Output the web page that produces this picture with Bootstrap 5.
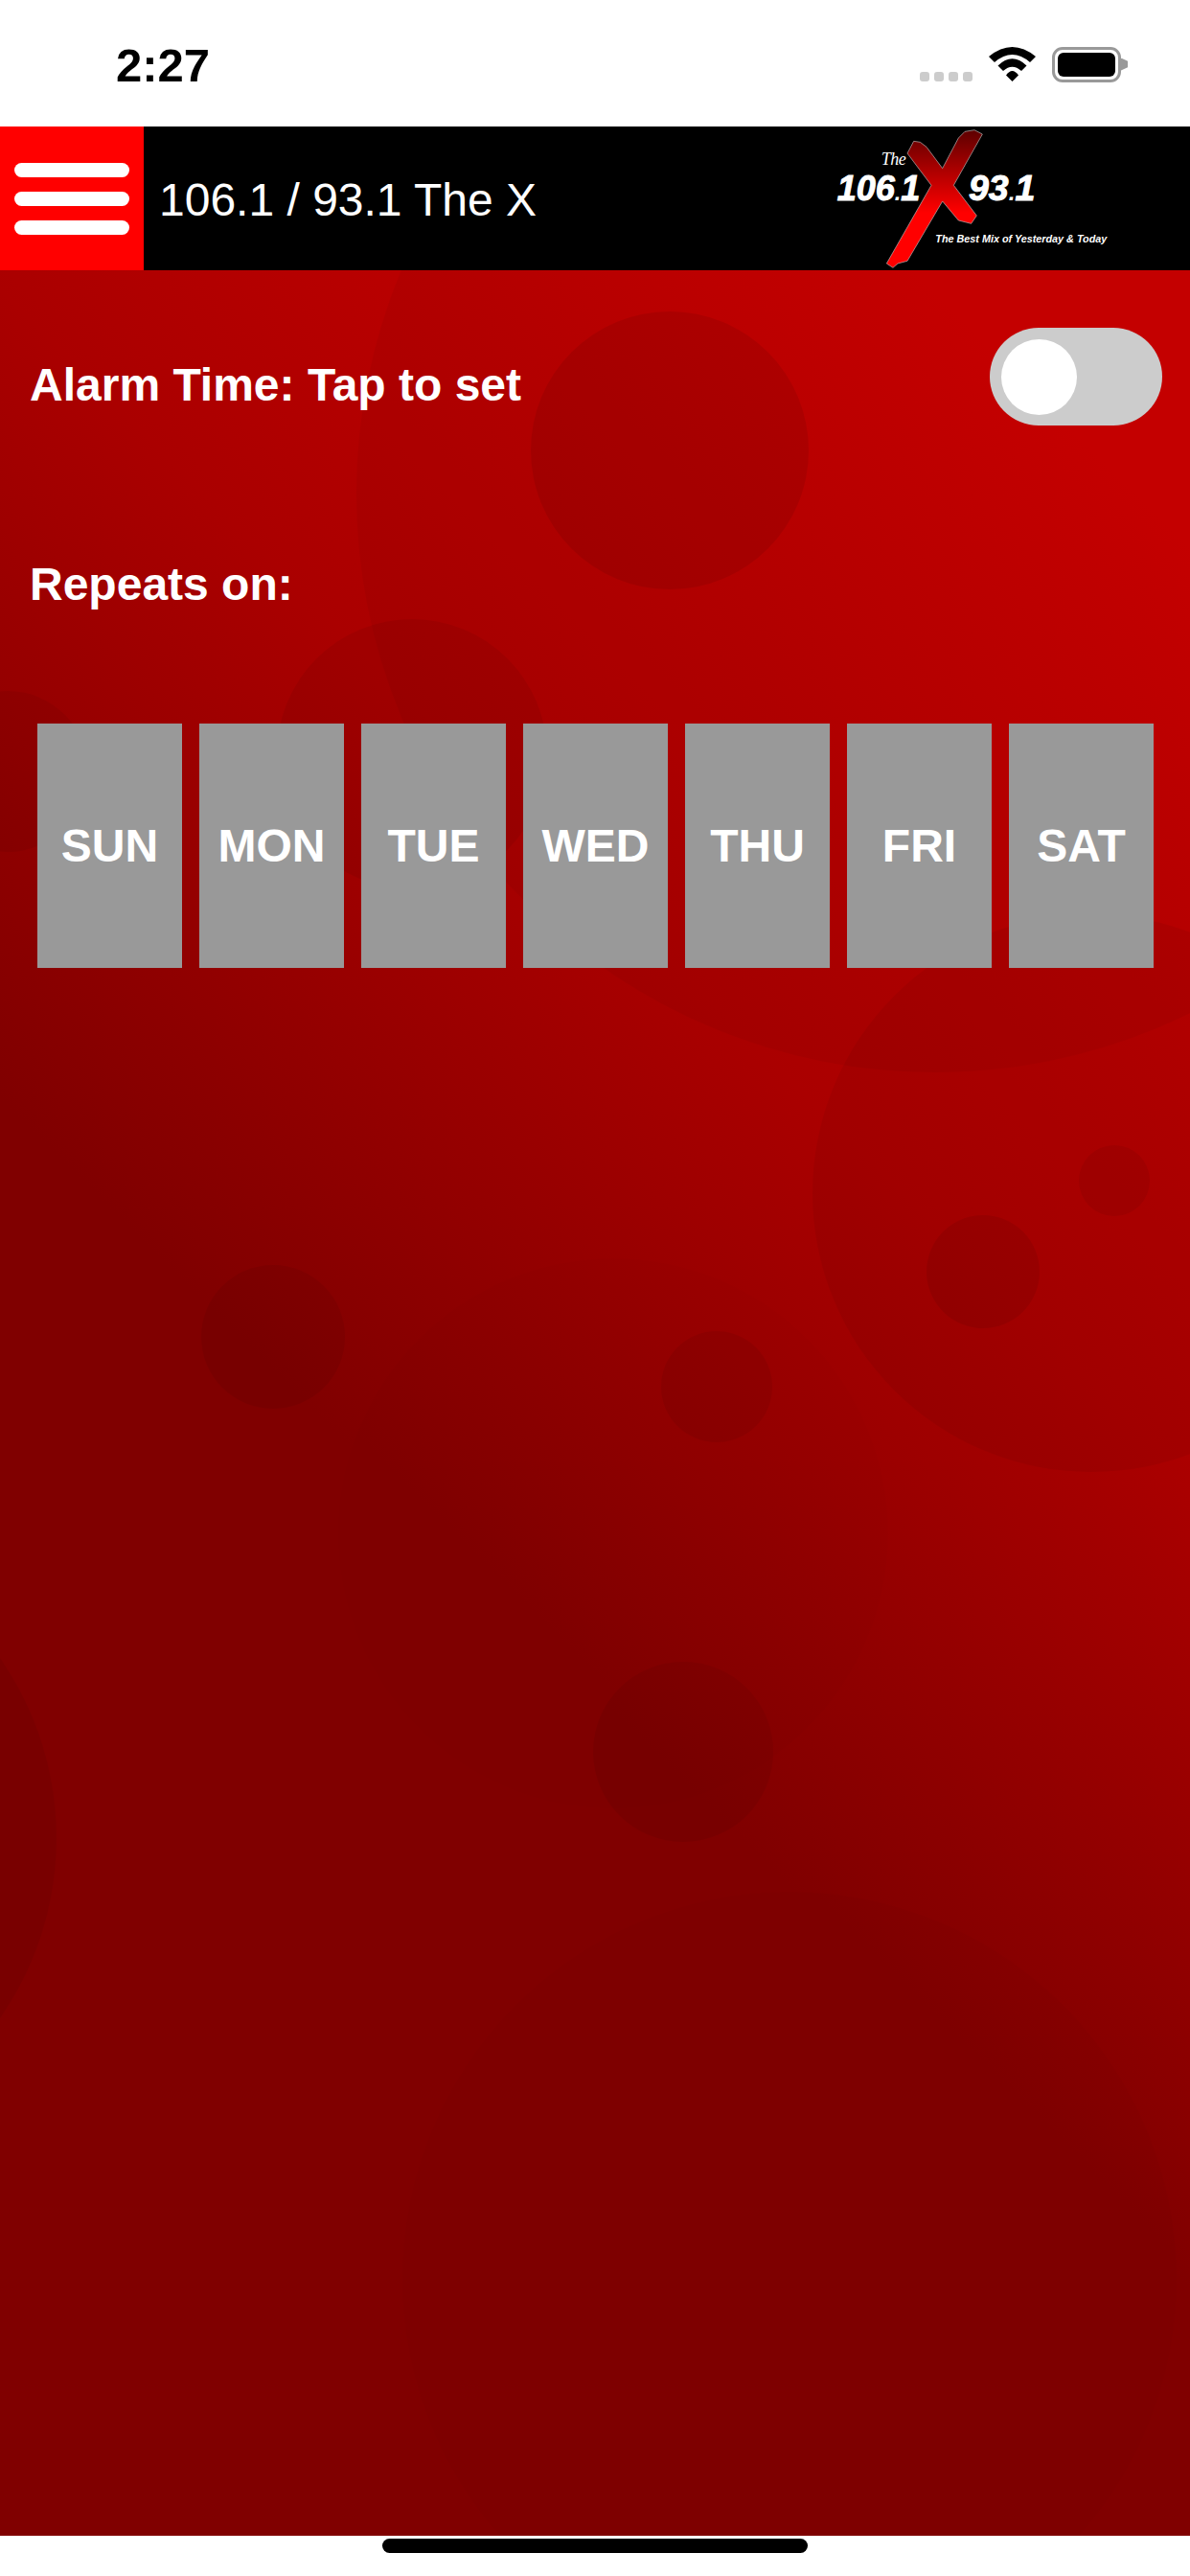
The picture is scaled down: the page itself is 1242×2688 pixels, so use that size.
<!DOCTYPE html>
<html lang="en">

<head>
    <meta charset="UTF-8">
    <meta name="viewport" content="width=device-width, initial-scale=1">
    <title>106.1 / 93.1 The X - Alarm</title>
    <link href="https://cdn.jsdelivr.net/npm/bootstrap@5.3.0/dist/css/bootstrap.min.css" rel="stylesheet">
    <style>
        body {
            width: 1242px;
            height: 2688px;
            background: #fff;
            font-family: "Liberation Sans", Arial, sans-serif;
        }

        .status-strip {
            height: 132px;
            padding-top: 2px;
            padding-left: 121px;
            padding-right: 65px;
        }

        .status-time {
            font-size: 49px;
            font-weight: 700;
            line-height: 1;
            margin-top: 2px;
            color: #000;
        }

        .signal-dot {
            width: 10px;
            height: 10px;
            border-radius: 3px;
            background: #ccc;
        }

        .signal-dots {
            gap: 5px;
            margin-top: 26px;
            margin-right: 17px;
        }

        .wifi-icon {
            margin-right: 17px;
        }

        .battery-shell {
            width: 72px;
            height: 37px;
            padding: 3px;
            border: 3px solid #999;
            border-radius: 11px;
        }

        .battery-fill {
            height: 100%;
            background: #000;
            border-radius: 6px;
        }

        .battery-nub {
            width: 7px;
            height: 13px;
            background: #999;
            clip-path: polygon(0 0, 100% 25%, 100% 75%, 0 100%);
        }

        .app-header {
            height: 150px;
            background: #000;
        }

        .menu-box {
            width: 150px;
            height: 150px;
            gap: 15px;
            background: #f00;
            border: 0;
            padding: 0;
        }

        .menu-line {
            width: 120px;
            height: 15px;
            background: #fff;
            border-radius: 8px;
        }

        .app-title {
            font-size: 48px;
            line-height: 1;
            color: #fff;
            margin-left: 16px;
            margin-top: 3px;
        }

        .logo-art {
            margin-right: 82px;
        }

        .alarm-page {
            height: 2364px;
            overflow: hidden;
            background: linear-gradient(45deg, #800000 0%, #800000 41.6%, #aa0000 65%, #cc0000 92%, #cc0000 100%);
        }

        .bubble-layer {
            top: 0;
            left: 0;
        }

        .page-body {
            z-index: 1;
        }

        .alarm-row {
            height: 102px;
            margin-top: 60px;
            padding-left: 31px;
            padding-right: 30px;
        }

        .form-label-text {
            font-size: 48px;
            font-weight: 700;
            line-height: 1;
            color: #fff;
        }

        .alarm-label {
            margin-top: 18px;
        }

        .alarm-toggle {
            width: 180px;
            height: 102px;
            margin-right: -1px;
            padding-left: 12px;
            background: #ccc;
            border-radius: 51px;
        }

        .toggle-knob {
            width: 79px;
            height: 79px;
            background: #fff;
            border-radius: 50%;
        }

        .repeats-label {
            margin-top: 142px;
            padding-left: 31px;
        }

        .day-row {
            gap: 18px;
            margin-top: 121px;
            padding-left: 39px;
        }

        .day-tile {
            width: 151px;
            height: 255px;
            padding: 0;
            background: #999;
            border: 0;
            border-radius: 0;
            color: #fff;
            font-size: 48px;
            font-weight: 700;
        }

        .home-strip {
            height: 42px;
            padding-top: 3px;
        }

        .home-pill {
            width: 444px;
            height: 15px;
            background: #000;
            border-radius: 8px;
        }
    </style>
</head>

<body>

    <div class="status-strip d-flex align-items-center">
        <div class="status-time me-auto">2:27</div>
        <div class="signal-dots d-flex">
            <span class="signal-dot"></span>
            <span class="signal-dot"></span>
            <span class="signal-dot"></span>
            <span class="signal-dot"></span>
        </div>
        <svg class="wifi-icon" width="49" height="36" viewBox="0 0 49 36" fill="#000">
            <path d="M0 10Q24.5 -10 49 10L43 16Q24.5 0 6 16Z" />
            <path d="M9.5 19.5Q24.5 5 39.5 19.5L34 25Q24.5 16.5 15 25Z" />
            <path d="M18 29.5Q24.5 20.5 31 29.5L24.5 36Z" />
        </svg>
        <div class="battery-shell">
            <div class="battery-fill"></div>
        </div>
        <div class="battery-nub"></div>
    </div>

    <header class="app-header d-flex align-items-center">
        <button class="menu-box d-flex flex-column align-items-center justify-content-center" type="button">
            <span class="menu-line"></span>
            <span class="menu-line"></span>
            <span class="menu-line"></span>
        </button>
        <div class="app-title me-auto">106.1 / 93.1 The X</div>
        <svg class="logo-art" width="293.33" height="150" viewBox="200 336 880 450">
            <defs>
                <linearGradient id="logoX" x1="0" y1="345" x2="0" y2="780" gradientUnits="userSpaceOnUse">
                    <stop offset="0" stop-color="#5c0000" />
                    <stop offset="0.6" stop-color="#f00" />
                    <stop offset="1" stop-color="#f00" />
                </linearGradient>
            </defs>
            <text x="358" y="456" font-family="Liberation Serif" font-style="italic" font-size="54" fill="#fff" textLength="78">The</text>
            <text x="220" y="568" font-family="Liberation Sans" font-style="italic" font-weight="700" font-size="112" fill="#fff" stroke="#fff" stroke-width="3" textLength="260" lengthAdjust="spacingAndGlyphs">106<tspan font-size="72" stroke-width="0">.</tspan>1</text>
            <text x="632" y="568" font-family="Liberation Sans" font-style="italic" font-weight="700" font-size="112" fill="#fff" stroke="#fff" stroke-width="3" textLength="208" lengthAdjust="spacingAndGlyphs">93<tspan font-size="72" stroke-width="0">.</tspan>1</text>
            <path d="M675 360L650 347L620 352L600 372L550 467L500 400L480 385L460 382L440 420L515 520L375 765L395 778L410 765L440 757L550 570L600 630L640 640L657 615L585 520Z" fill="url(#logoX)" stroke="#bbb" stroke-width="2" />
            <text x="528" y="698" font-family="Liberation Sans" font-style="italic" font-weight="700" font-size="31" fill="#fff" textLength="537" lengthAdjust="spacingAndGlyphs">The Best Mix of Yesterday &amp; Today</text>
        </svg>
    </header>

    <main class="alarm-page position-relative">
        <!-- bubbles in page coords, minus 282 for the header -->
        <svg class="bubble-layer position-absolute" width="1242" height="2364" viewBox="0 282 1242 2364" fill="#000">
            <circle cx="976" cy="515" r="604" opacity="0.04" />
            <circle cx="699" cy="470" r="145" opacity="0.08" />
            <circle cx="430" cy="787" r="141" opacity="0.06" />
            <circle cx="8" cy="805" r="84" opacity="0.05" />
            <circle cx="1139" cy="1245" r="291" opacity="0.05" />
            <circle cx="1163" cy="1232" r="37" opacity="0.06" />
            <circle cx="1026" cy="1327" r="59" opacity="0.07" />
            <circle cx="285" cy="1395" r="75" opacity="0.06" />
            <circle cx="748" cy="1447" r="58" opacity="0.06" />
            <circle cx="713" cy="1828" r="94" opacity="0.06" />
            <circle cx="-270" cy="1918" r="329" opacity="0.05" />
            <circle cx="824" cy="2378" r="404" opacity="0.015" />
            <circle cx="640" cy="1600" r="287" opacity="0.008" />
        </svg>

        <div class="page-body position-relative">
            <div class="alarm-row d-flex align-items-center justify-content-between">
                <div class="form-label-text alarm-label">Alarm Time: Tap to set</div>
                <div class="alarm-toggle d-flex align-items-center">
                    <span class="toggle-knob"></span>
                </div>
            </div>

            <div class="form-label-text repeats-label">Repeats on:</div>

            <div class="day-row d-flex">
                <button class="day-tile btn" type="button">SUN</button>
                <button class="day-tile btn" type="button">MON</button>
                <button class="day-tile btn" type="button">TUE</button>
                <button class="day-tile btn" type="button">WED</button>
                <button class="day-tile btn" type="button">THU</button>
                <button class="day-tile btn" type="button">FRI</button>
                <button class="day-tile btn" type="button">SAT</button>
            </div>
        </div>
    </main>

    <div class="home-strip d-flex justify-content-center">
        <div class="home-pill"></div>
    </div>

    <script src="https://cdn.jsdelivr.net/npm/bootstrap@5.3.0/dist/js/bootstrap.bundle.min.js"></script>
</body>

</html>
